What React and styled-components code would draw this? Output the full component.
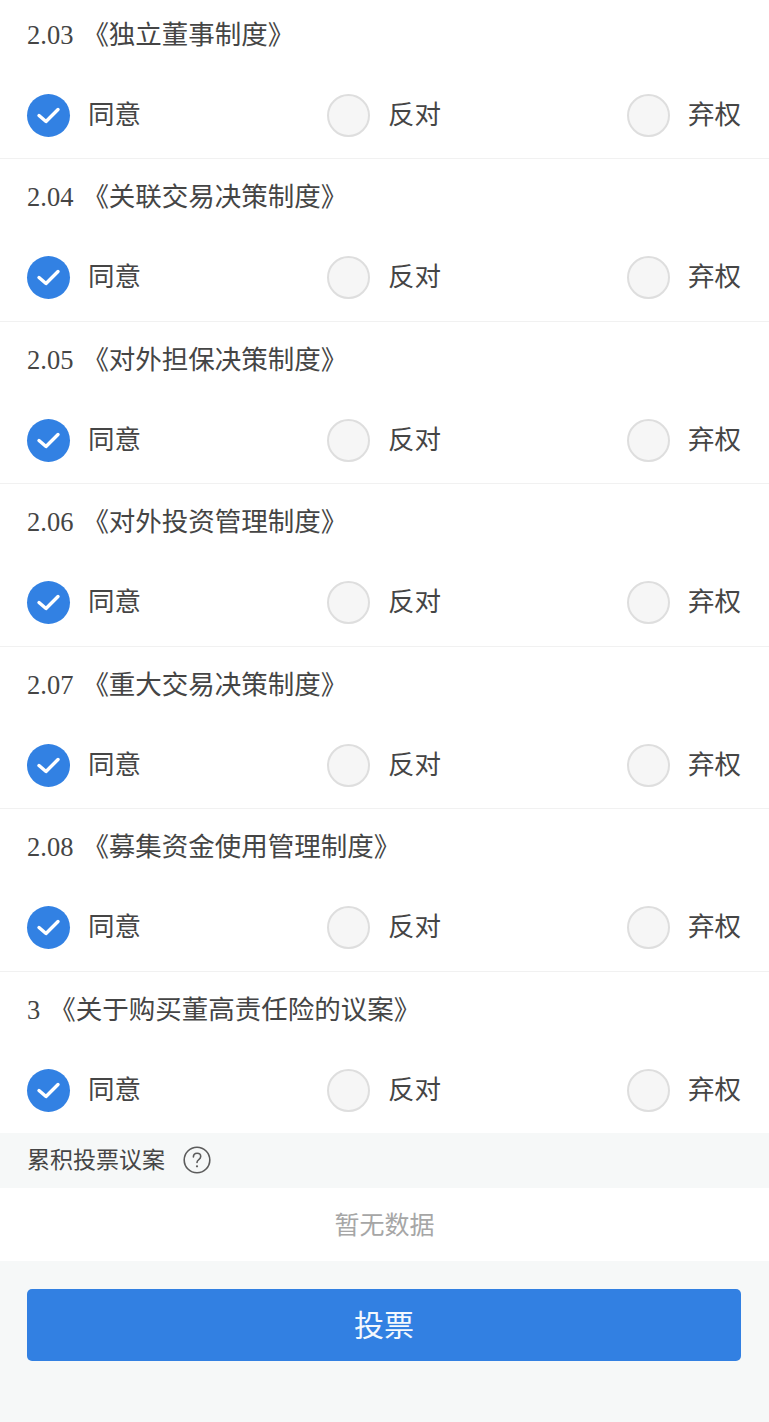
import React from "react";
import styled, { createGlobalStyle } from "styled-components";

const GlobalStyle = createGlobalStyle`
  html, body { margin: 0; padding: 0; background: #f6f8f8; }
  body { font-family: "Liberation Serif", "Noto Sans CJK SC", serif; overflow-x: hidden; }
`;

const Page = styled.main`
  width: 769px;
  height: 1422px;
  overflow: hidden;
  display: flex;
  flex-direction: column;
  background: #f6f8f8;
`;

const List = styled.section`
  margin-top: -3.5px;
  background: #fff;
`;

const Motion = styled.article`
  height: 162.5px;
  box-sizing: border-box;
  border-bottom: 1px solid #f1f1f1;
  display: flex;
  flex-direction: column;
  &:last-child { border-bottom: 0; height: 161px; }
`;

const Title = styled.h3`
  margin: 0;
  height: 76.5px;
  box-sizing: border-box;
  padding: 0 27px;
  display: flex;
  align-items: center;
  gap: 9px;
  font-size: 26.5px;
  line-height: 1;
  font-weight: 400;
  color: #454545;
  white-space: pre;
`;

const Options = styled.div`
  height: 84px;
  padding: 0 28px 0 27px;
  display: flex;
  justify-content: space-between;
  align-items: center;
`;

const Option = styled.label`
  width: 114px;
  display: flex;
  align-items: center;
  gap: 18px;
  font-family: "Noto Sans CJK SC", sans-serif;
  font-size: 26.5px;
  color: #454545;
`;

const OptionText = styled.span`
  line-height: 1;
  padding-bottom: 4px;
  white-space: nowrap;
`;

const Radio = styled.span`
  width: 43px;
  height: 43px;
  flex: none;
  box-sizing: border-box;
  border-radius: 50%;
  display: flex;
  align-items: center;
  justify-content: center;
  background: ${(p) => (p.$checked ? "#3281e3" : "#f6f6f6")};
  border: ${(p) => (p.$checked ? "0" : "2px solid #dedede")};
`;

const SectionHead = styled.header`
  height: 55.5px;
  padding: 0 27px;
  display: flex;
  align-items: center;
  gap: 18px;
  font-family: "Noto Sans CJK SC", sans-serif;
  font-size: 23px;
  color: #454545;
  background: #f6f8f8;
`;

const SectionLabel = styled.span`
  line-height: 1;
  padding-bottom: 3px;
`;

const Empty = styled.div`
  height: 72.5px;
  box-sizing: border-box;
  padding-bottom: 1px;
  display: flex;
  align-items: center;
  justify-content: center;
  background: #fff;
  font-family: "Noto Sans CJK SC", sans-serif;
  font-size: 25px;
  line-height: 1;
  color: #a6a6a6;
`;

const Footer = styled.footer`
  flex: 1;
  padding: 28px 28px 0 27px;
`;

const VoteButton = styled.button`
  display: block;
  width: 714px;
  height: 72px;
  border: 0;
  border-radius: 5px;
  background: #3280e2;
  color: #f4f8fd;
  font-family: "Noto Sans CJK SC", sans-serif;
  font-size: 30px;
  line-height: 1;
  padding: 0 0 3px;
`;

const Check = () => (
  <svg width="25" height="19" viewBox="0 0 25 19" fill="none" aria-hidden="true">
    <path d="M3 9.5 L10 15.5 L22 3.5" stroke="#fff" strokeWidth="3.4" strokeLinecap="round" strokeLinejoin="round" />
  </svg>
);

const HelpIcon = () => (
  <svg width="28" height="28" viewBox="0 0 28 28" fill="none" aria-hidden="true">
    <circle cx="14" cy="14" r="12.8" stroke="#5c5c5c" strokeWidth="1.6" />
    <path d="M10.4 11c0-2.3 1.6-3.7 3.7-3.7s3.6 1.3 3.6 3.2c0 1.5-.8 2.3-1.9 3.1-1.1.8-1.8 1.4-1.8 2.9" stroke="#5c5c5c" strokeWidth="1.6" strokeLinecap="round" />
    <circle cx="14" cy="20.3" r="1.1" fill="#5c5c5c" />
  </svg>
);

const motions = [
  ["2.03", "《独立董事制度》"],
  ["2.04", "《关联交易决策制度》"],
  ["2.05", "《对外担保决策制度》"],
  ["2.06", "《对外投资管理制度》"],
  ["2.07", "《重大交易决策制度》"],
  ["2.08", "《募集资金使用管理制度》"],
  ["3", "《关于购买董高责任险的议案》"],
];

const choices = ["同意", "反对", "弃权"];

export default function App() {
  return (
    <Page>
      <GlobalStyle />
      <List>
        {motions.map(([code, name]) => (
          <Motion key={code}>
            <Title>
              <span>{code}</span>
              <span>{name}</span>
            </Title>
            <Options>
              {choices.map((choice, i) => (
                <Option key={choice}>
                  <Radio $checked={i === 0}>{i === 0 && <Check />}</Radio>
                  <OptionText>{choice}</OptionText>
                </Option>
              ))}
            </Options>
          </Motion>
        ))}
      </List>
      <SectionHead>
        <SectionLabel>累积投票议案</SectionLabel>
        <HelpIcon />
      </SectionHead>
      <Empty>暂无数据</Empty>
      <Footer>
        <VoteButton type="button">投票</VoteButton>
      </Footer>
    </Page>
  );
}
